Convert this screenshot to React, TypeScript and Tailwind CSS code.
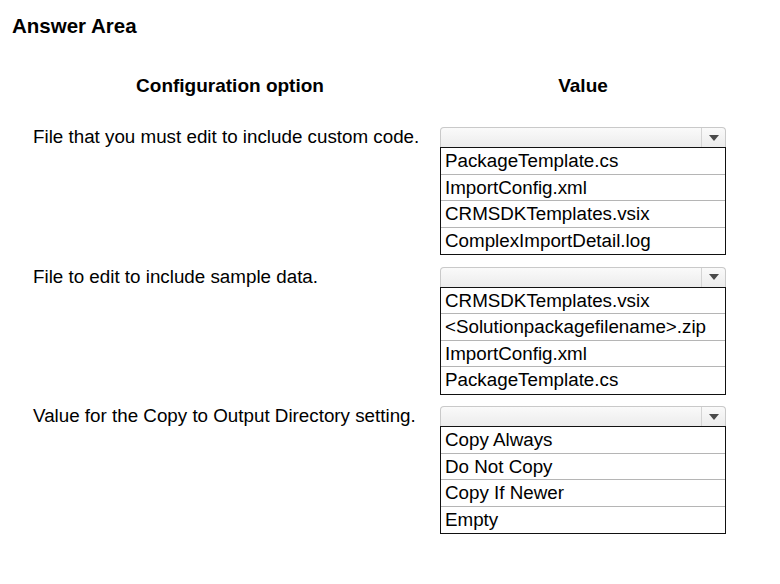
const questions = [
  {
    label: "File that you must edit to include custom code.",
    options: [
      "PackageTemplate.cs",
      "ImportConfig.xml",
      "CRMSDKTemplates.vsix",
      "ComplexImportDetail.log",
    ],
  },
  {
    label: "File to edit to include sample data.",
    options: [
      "CRMSDKTemplates.vsix",
      "<Solutionpackagefilename>.zip",
      "ImportConfig.xml",
      "PackageTemplate.cs",
    ],
  },
  {
    label: "Value for the Copy to Output Directory setting.",
    options: ["Copy Always", "Do Not Copy", "Copy If Newer", "Empty"],
  },
];

function Dropdown({ options }: { options: string[] }) {
  return (
    <div className="w-[286px]">
      {/* closed select bar */}
      <div className="flex h-[20px] rounded-t-[4px] border border-b-0 border-[#c9c9c9] bg-gradient-to-b from-[#fafafa] to-[#ececec]">
        <div className="flex-1" />
        <div className="flex w-[24px] items-center justify-center border-l border-[#d4d4d4]">
          <svg width="10" height="6" viewBox="0 0 10 6">
            <path d="M0 0h10L5 6z" fill="#4a4a4a" />
          </svg>
        </div>
      </div>
      {/* option list */}
      <ul className="border border-[#111] divide-y divide-[#b5b5b5]">
        {options.map((opt) => (
          <li key={opt} className="h-[26.5px] pl-[4px] pt-[2px] text-[18.8px] leading-[22px] whitespace-nowrap">
            {opt}
          </li>
        ))}
      </ul>
    </div>
  );
}

export default function App() {
  return (
    <div className="h-[584px] w-[780px] bg-white text-black font-['Liberation_Sans',Arial,sans-serif]">
      <h1 className="pl-[12px] pt-[14px] text-[20.5px] font-bold leading-[24px]">Answer Area</h1>

      <div className="mt-[37px] flex pl-[33px]">
        <div className="w-[394px] text-center text-[19px] font-bold leading-[22px]">Configuration option</div>
        <div className="ml-[13px] w-[286px] text-center text-[19px] font-bold leading-[22px]">Value</div>
      </div>

      <div className="mt-[30px] flex flex-col gap-[11.5px] pl-[33px]">
        {questions.map((q) => (
          <div key={q.label} className="flex">
            <div className="w-[394px] text-[18.8px] leading-[20px]">{q.label}</div>
            <div className="ml-[13px]">
              <Dropdown options={q.options} />
            </div>
          </div>
        ))}
      </div>
    </div>
  );
}
